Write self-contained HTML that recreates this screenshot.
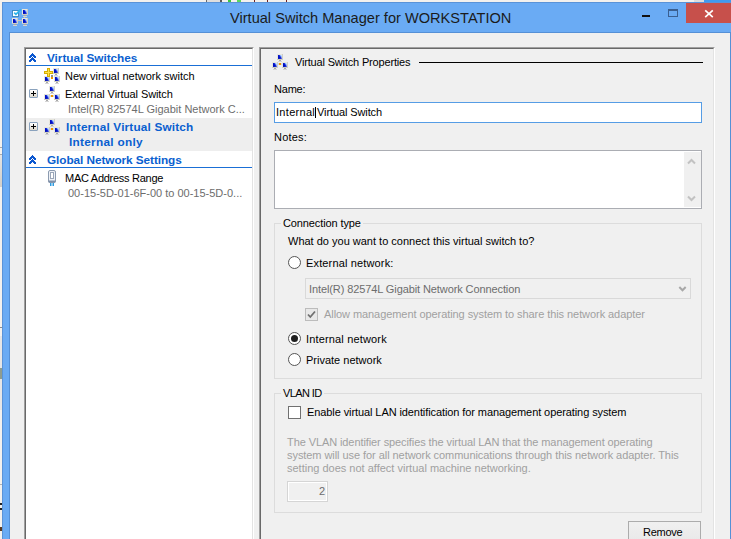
<!DOCTYPE html>
<html><head><meta charset="utf-8">
<style>
*{box-sizing:border-box}
html,body{margin:0;padding:0;width:731px;height:539px;overflow:hidden;background:#f3f1ee;font-family:"Liberation Sans",sans-serif;font-size:11px;color:#000}
.a{position:absolute}
svg.a{overflow:visible;shape-rendering:crispEdges}
.t{position:absolute;white-space:nowrap;line-height:13px;height:13px}
#frame{position:absolute;left:2px;top:2px;width:740px;height:560px;background:#6aabf4;border:1px solid #5a93d8}
#client{position:absolute;left:9px;top:32px;width:730px;height:520px;background:#f0f0f0;border-left:1px solid #5590d6;border-top:1px solid #5590d6}
.sunk{position:absolute;border-top:1px solid #a0a0a0;border-left:1px solid #a0a0a0;border-right:1px solid #fff;border-bottom:1px solid #fff}
.sunk>.in{position:absolute;left:0;top:0;right:0;bottom:0;border-top:1px solid #696969;border-left:1px solid #696969;border-right:1px solid #e3e3e3;border-bottom:1px solid #e3e3e3}
.hdr{color:#0a5fd0;font-weight:bold;font-size:11.8px}
.gray{color:#6d6d6d}
.dis{color:#a0a0a0}
.grp{position:absolute;border:1px solid #dcdcdc}
.radio{position:absolute;width:13px;height:13px;border-radius:50%;border:1px solid #555;background:#fff}
.chk{position:absolute;width:13px;height:13px;border:1px solid #707070;background:#fff}
.exp{position:absolute;width:9px;height:9px;border:1px solid #8aa2bd;border-radius:1px;background:linear-gradient(#fff,#ddd8cc)}
.exp:before{content:"";position:absolute;left:1px;top:3px;width:5px;height:1px;background:#000}
.exp:after{content:"";position:absolute;left:3px;top:1px;width:1px;height:5px;background:#000}
</style></head><body>
<svg width="0" height="0" style="position:absolute">
<defs>
<linearGradient id="scr" x1="0" y1="0" x2="1" y2="1"><stop offset="0" stop-color="#0010a8"/><stop offset="0.45" stop-color="#1a3ad0"/><stop offset="1" stop-color="#b8c8f4"/></linearGradient>
<g id="mon"><rect x="0" y="0" width="6" height="6" fill="#e6e5dc"/><rect x="5" y="0" width="1" height="6" fill="#cfcec4"/><rect x="0" y="5" width="6" height="1" fill="#cfcec4"/><rect x="1" y="1" width="1" height="1" fill="#0a14c8"/><rect x="2" y="1" width="1" height="1" fill="#2038d8"/><rect x="3" y="1" width="1" height="1" fill="#90b8f8"/><rect x="4" y="1" width="1" height="1" fill="#c8dcff"/><rect x="1" y="2" width="1" height="1" fill="#0010c8"/><rect x="2" y="2" width="1" height="1" fill="#0818d0"/><rect x="3" y="2" width="1" height="1" fill="#4868e4"/><rect x="4" y="2" width="1" height="1" fill="#a8c4f8"/><rect x="1" y="3" width="1" height="1" fill="#0010c0"/><rect x="2" y="3" width="1" height="1" fill="#0010c8"/><rect x="3" y="3" width="1" height="1" fill="#1828d0"/><rect x="4" y="3" width="1" height="1" fill="#8898f0"/><rect x="1" y="4" width="1" height="1" fill="#0818b8"/><rect x="2" y="4" width="1" height="1" fill="#1020c0"/><rect x="3" y="4" width="1" height="1" fill="#2030c8"/><rect x="4" y="4" width="1" height="1" fill="#5868e0"/><rect x="2" y="6" width="2" height="1" fill="#a8a8a8"/><rect x="1" y="7" width="4" height="1" fill="#d4d4d4"/></g>
<g id="net">
<use href="#mon" x="5" y="0"/>
<use href="#mon" x="0" y="8"/>
<use href="#mon" x="10" y="8"/>
<rect x="7" y="9" width="2" height="2" fill="#f09a00"/>
<rect x="6" y="9" width="1" height="2" fill="#d8d8d8"/>
<rect x="9" y="9" width="1" height="2" fill="#d8d8d8"/>
</g>
<g id="chev">
<rect x="3" y="0" width="1" height="1"/><rect x="2" y="1" width="3" height="1"/><rect x="1" y="2" width="5" height="1"/>
<rect x="0" y="3" width="3" height="1"/><rect x="4" y="3" width="3" height="1"/>
<rect x="0" y="4" width="2" height="1"/><rect x="3" y="4" width="1" height="1"/><rect x="5" y="4" width="2" height="1"/>
<rect x="2" y="5" width="3" height="1"/><rect x="1" y="6" width="5" height="1"/>
<rect x="0" y="7" width="3" height="1"/><rect x="4" y="7" width="3" height="1"/>
<rect x="0" y="8" width="2" height="1"/><rect x="5" y="8" width="2" height="1"/>
</g>
</defs></svg>
<div id="frame"></div>
<div id="client"></div>
<div class="a" style="left:0;top:147px;width:2px;height:1px;background:#a8a8a8"></div>
<div class="a" style="left:0;top:154px;width:2px;height:1px;background:#a8a8a8"></div>
<div class="a" style="left:0;top:155px;width:2px;height:32px;background:linear-gradient(#e4e4e4,#d2cec8)"></div>
<div class="a" style="left:0;top:327px;width:2px;height:1px;background:#8c8c8c"></div>
<div class="a" style="left:0;top:336px;width:2px;height:74px;background:#e6e6e6"></div>
<div class="a" style="left:0;top:368px;width:2px;height:11px;background:#8f9c8f"></div>
<div class="a" style="left:0;top:484px;width:2px;height:1px;background:#b0b0b0"></div>
<div class="a" style="left:0;top:503px;width:2px;height:2px;background:#222"></div>
<div class="a" style="left:0;top:508px;width:2px;height:2px;background:#222"></div>
<div class="a" style="left:0;top:527px;width:2px;height:4px;background:#5a3a20"></div>
<div class="a" style="left:730px;top:32px;width:1px;height:520px;background:#5590d6"></div>
<div class="a" style="left:206px;top:0;width:1px;height:2px;background:#6a6a6a"></div>
<div class="a" style="left:207px;top:0;width:13px;height:2px;background:#dedede"></div>
<div class="a" style="left:220px;top:0;width:2px;height:2px;background:#5a5a5a"></div>
<div class="a" style="left:228px;top:0;width:3px;height:2px;background:#3cc83c"></div>
<div class="a" style="left:237px;top:0;width:4px;height:2px;background:#5cd85c"></div>
<div class="a" style="left:254px;top:0;width:1px;height:2px;background:#702020"></div>
<div class="a" style="left:267px;top:0;width:1px;height:2px;background:#702020"></div>
<div class="a" style="left:286px;top:0;width:1px;height:2px;background:#702020"></div>
<div class="a" style="left:694px;top:0;width:10px;height:2px;background:#dcdcdc"></div>
<div class="a" style="left:704px;top:0;width:27px;height:2px;background:#3f9af0"></div>

<!-- title bar -->
<svg class="a" style="left:12px;top:9px" width="17" height="16" viewBox="0 0 17 16">
<rect x="0" y="1" width="7" height="7" fill="#3d8cc4"/>
<rect x="1" y="2" width="5" height="5" fill="#fff"/>
<path d="M2.2 3.7 L3.9 5.3 L8.8 0.4" stroke="#2ab4ea" stroke-width="1.7" fill="none" style="shape-rendering:auto"/>
<use href="#mon" x="10" y="0"/>
<use href="#mon" x="0" y="9"/>
<use href="#mon" x="10" y="9"/>
<rect x="6" y="11" width="4" height="1" fill="#c8c3b8"/>
<rect x="12" y="8" width="1" height="1" fill="#c8c3b8"/>
</svg>
<div class="t" style="left:230px;top:8px;font-size:14.6px;line-height:20px;height:20px;color:#1b1b1b">Virtual Switch Manager for WORKSTATION</div>
<div class="a" style="left:642px;top:15px;width:8px;height:2px;background:#111"></div>
<div class="a" style="left:668px;top:9px;width:10px;height:8px;border:1px solid #3a5f90;border-top-width:2px"></div>
<div class="a" style="left:686px;top:3px;width:50px;height:20px;background:#c7504b"></div>
<svg class="a" style="left:704px;top:10px;shape-rendering:auto" width="10" height="8" viewBox="0 0 10 8"><path d="M1.2 0.3L8.8 7.1M8.8 0.3L1.2 7.1" stroke="#fff" stroke-width="1.7"/></svg>

<!-- tree panel -->
<div class="sunk" style="left:24px;top:47px;width:230px;height:520px;background:#fff"><div class="in"></div></div>
<div class="a" style="left:26px;top:118px;width:226px;height:33px;background:#eeeeee"></div>
<div class="a" style="left:26px;top:65px;width:226px;height:1px;background:#1a6fd6"></div>
<div class="a" style="left:26px;top:167px;width:226px;height:1px;background:#1a6fd6"></div>

<svg class="a" style="left:29px;top:53px" width="7" height="9" fill="#0b57d0"><use href="#chev"/></svg>
<div class="t hdr" style="left:47px;top:52px;letter-spacing:-0.04px">Virtual Switches</div>
<svg class="a" style="left:44px;top:68px" width="16" height="16">
<use href="#mon" x="9" y="0"/>
<use href="#mon" x="0" y="8"/>
<use href="#mon" x="10" y="8"/>
<rect x="7" y="9" width="2" height="2" fill="#f09a00"/>
<rect x="7" y="7" width="2" height="2" fill="#8a8f99"/>
<path d="M3 0h3v3h3v3h-3v3h-3v-3h-3v-3h3z" fill="#d8ae00"/><rect x="4" y="1" width="1" height="7" fill="#ffe24a"/><rect x="1" y="4" width="7" height="1" fill="#ffe24a"/>
</svg>
<div class="t" style="left:65px;top:70px">New virtual network switch</div>
<div class="exp" style="left:29px;top:89px"></div>
<svg class="a" style="left:44px;top:86px" width="16" height="16"><use href="#net"/></svg>
<div class="t" style="left:65px;top:88px;letter-spacing:-0.09px">External Virtual Switch</div>
<div class="t gray" style="left:68px;top:103px">Intel(R) 82574L Gigabit Network C...</div>
<div class="exp" style="left:29px;top:122px"></div>
<svg class="a" style="left:44px;top:119px" width="16" height="16"><use href="#net"/></svg>
<div class="t hdr" style="left:66px;top:121px;letter-spacing:0.16px">Internal Virtual Switch</div>
<div class="t hdr" style="left:69px;top:136px;letter-spacing:0.28px">Internal only</div>
<svg class="a" style="left:29px;top:155px" width="7" height="9" fill="#0b57d0"><use href="#chev"/></svg>
<div class="t hdr" style="left:47px;top:154px;letter-spacing:-0.07px">Global Network Settings</div>
<svg class="a" style="left:47px;top:170px;shape-rendering:auto" width="10" height="17" viewBox="0 0 10 17">
<rect x="1.5" y="0.5" width="7" height="12" rx="1.5" fill="#eef1f6" stroke="#8c9bb0"/>
<rect x="3.5" y="2.5" width="3" height="6" fill="#fff" stroke="#9aa6b8"/>
<rect x="1.5" y="10.5" width="7" height="2" fill="#7f8fa8"/>
<rect x="3" y="13" width="1.5" height="3" fill="#2e9be0"/>
<rect x="5.5" y="13" width="1.5" height="3" fill="#2e9be0"/>
</svg>
<div class="t" style="left:65px;top:172px;letter-spacing:-0.27px">MAC Address Range</div>
<div class="t gray" style="left:68px;top:187px">00-15-5D-01-6F-00 to 00-15-5D-0...</div>

<!-- details panel -->
<div class="sunk" style="left:259px;top:47px;width:456px;height:520px"><div class="in"></div></div>
<svg class="a" style="left:272px;top:54px" width="16" height="16"><use href="#net"/></svg>
<div class="t" style="left:295px;top:56px;letter-spacing:-0.17px">Virtual Switch Properties</div>
<div class="a" style="left:419px;top:62px;width:284px;height:1px;background:#000"></div>

<div class="t" style="left:274px;top:83px;letter-spacing:-0.2px">Name:</div>
<div class="a" style="left:274px;top:102px;width:428px;height:21px;background:#fff;border:1px solid #569de5"></div>
<div class="t" style="left:276px;top:106px;letter-spacing:0.3px">Internal</div>
<div class="a" style="left:315px;top:107px;width:1px;height:11px;background:#000"></div>
<div class="t" style="left:317px;top:106px;letter-spacing:-0.1px">Virtual Switch</div>

<div class="t" style="left:274px;top:131px;letter-spacing:0.2px">Notes:</div>
<div class="a" style="left:274px;top:150px;width:428px;height:59px;background:#fff;border:1px solid #abadb3"></div>
<div class="a" style="left:684px;top:152px;width:17px;height:55px;background:#f0f0f0"></div>
<svg class="a" style="left:684px;top:151px;shape-rendering:auto" width="17" height="57"><path d="M4 12.5L7.5 9 11 12.5M4 45.5L7.5 49 11 45.5" stroke="#c2c2c2" stroke-width="2" fill="none"/></svg>

<!-- connection type group -->
<div class="grp" style="left:274px;top:223px;width:428px;height:156px"></div>
<div class="t" style="left:281px;top:217px;padding:0 2px;background:#f0f0f0;letter-spacing:-0.11px">Connection type</div>
<div class="t" style="left:288px;top:235px">What do you want to connect this virtual switch to?</div>
<div class="radio" style="left:288px;top:256px"></div>
<div class="t" style="left:306px;top:257px;letter-spacing:0.15px">External network:</div>
<div class="a" style="left:305px;top:278px;width:386px;height:21px;border:1px solid #d9d9d9;background:#f0f0f0"></div>
<div class="t gray" style="left:309px;top:283px;letter-spacing:-0.1px">Intel(R) 82574L Gigabit Network Connection</div>
<svg class="a" style="left:677px;top:284px;shape-rendering:auto" width="10" height="8"><path d="M2.3 3L5.5 6.3 8.7 3" stroke="#a8a8a8" stroke-width="2" fill="none"/></svg>
<div class="chk" style="left:305px;top:308px;border-color:#bcbcbc;background:#e8e8e8"></div>
<svg class="a" style="left:305px;top:308px;shape-rendering:auto" width="13" height="13"><path d="M3 6.5l2.3 2.5 4.7-5.5" stroke="#707070" stroke-width="1.8" fill="none"/></svg>
<div class="t dis" style="left:324px;top:308px;letter-spacing:-0.07px">Allow management operating system to share this network adapter</div>
<div class="radio" style="left:288px;top:332px"></div>
<div class="a" style="left:291px;top:335px;width:7px;height:7px;border-radius:50%;background:#1e1e1e"></div>
<div class="t" style="left:306px;top:333px;letter-spacing:0.16px">Internal network</div>
<div class="radio" style="left:288px;top:353px"></div>
<div class="t" style="left:306px;top:354px">Private network</div>

<!-- VLAN group -->
<div class="grp" style="left:274px;top:393px;width:428px;height:120px"></div>
<div class="t" style="left:281px;top:387px;padding:0 2px;background:#f0f0f0;letter-spacing:-0.6px">VLAN ID</div>
<div class="chk" style="left:288px;top:406px"></div>
<div class="t" style="left:307px;top:406px;letter-spacing:-0.09px">Enable virtual LAN identification for management operating system</div>
<div class="t dis" style="left:287px;top:436px;letter-spacing:-0.09px">The VLAN identifier specifies the virtual LAN that the management operating</div>
<div class="t dis" style="left:287px;top:449px;letter-spacing:-0.06px">system will use for all network communications through this network adapter. This</div>
<div class="t dis" style="left:287px;top:462px">setting does not affect virtual machine networking.</div>
<div class="a" style="left:287px;top:481px;width:41px;height:21px;border:1px solid #d5d5d5;background:#f0f0f0;box-shadow:inset 0 0 0 1px #fff"></div>
<div class="t gray" style="left:287px;top:485px;width:38px;text-align:right">2</div>

<div class="a" style="left:628px;top:521px;width:73px;height:30px;border:1px solid #acacac;background:linear-gradient(#f0f0f0,#e5e5e5)"></div>
<div class="t" style="left:643px;top:526px;letter-spacing:-0.25px">Remove</div>
</body></html>
